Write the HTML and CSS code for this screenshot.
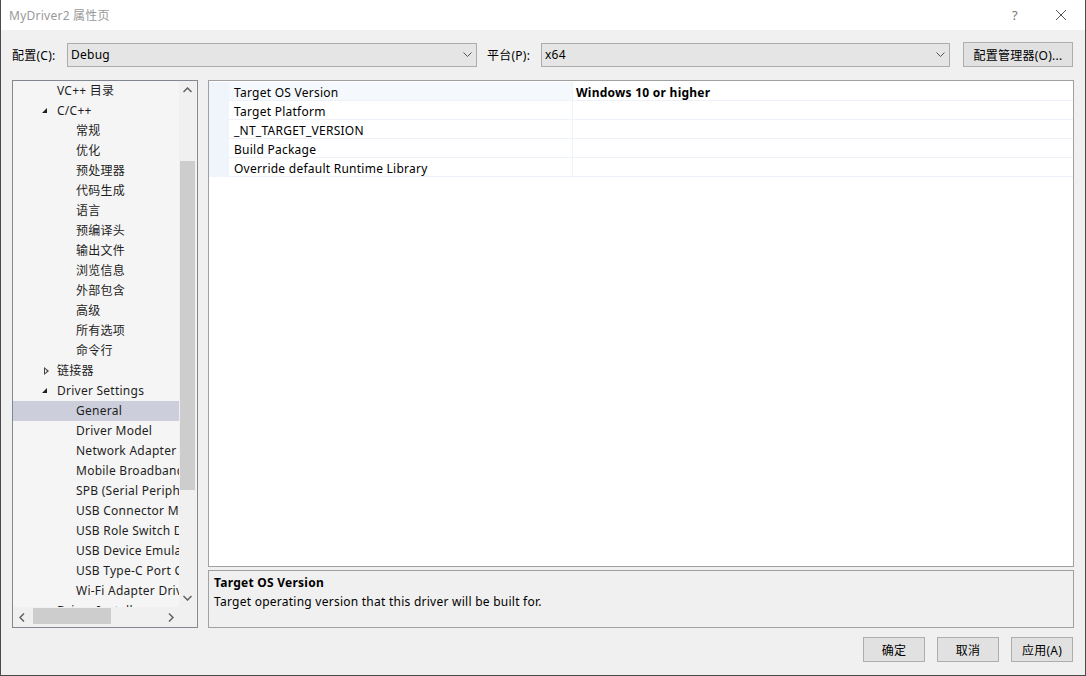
FILE: index.html
```html
<!DOCTYPE html>
<html lang="zh-CN">
<head>
    <meta charset="UTF-8">
    <title>MyDriver2 属性页</title>
    <link rel="stylesheet" href="styles.css">
</head>
<body>
    <div class="dialog">
        <div class="titlebar">
            <span class="title">MyDriver2 属性页</span>
            <span class="caption-btn help">?</span>
            <span class="caption-btn close">
                <svg width="12" height="12" viewBox="0 0 12 12"><path d="M1 1L11 11M11 1L1 11" stroke="#555" stroke-width="1"/></svg>
            </span>
        </div>

        <div class="config-row">
            <label class="lbl">配置(C):</label>
            <div class="combo combo-config">
                <span>Debug</span>
                <svg class="chev" width="9" height="5" viewBox="0 0 9 5"><path d="M0.5 0.5L4.5 4.5L8.5 0.5" stroke="#555" fill="none"/></svg>
            </div>
            <label class="lbl lbl-platform">平台(P):</label>
            <div class="combo combo-platform">
                <span>x64</span>
                <svg class="chev" width="9" height="5" viewBox="0 0 9 5"><path d="M0.5 0.5L4.5 4.5L8.5 0.5" stroke="#555" fill="none"/></svg>
            </div>
            <button class="btn btn-manager">配置管理器(O)...</button>
        </div>

        <div class="main">
            <div class="tree">
                <div class="tree-view">
                    <div class="tree-items">
                        <div class="node l1"><span class="tw"></span>VC++ 目录</div>
                        <div class="node l1"><span class="tw open"></span>C/C++</div>
                        <div class="node l2">常规</div>
                        <div class="node l2">优化</div>
                        <div class="node l2">预处理器</div>
                        <div class="node l2">代码生成</div>
                        <div class="node l2">语言</div>
                        <div class="node l2">预编译头</div>
                        <div class="node l2">输出文件</div>
                        <div class="node l2">浏览信息</div>
                        <div class="node l2">外部包含</div>
                        <div class="node l2">高级</div>
                        <div class="node l2">所有选项</div>
                        <div class="node l2">命令行</div>
                        <div class="node l1"><span class="tw shut"></span>链接器</div>
                        <div class="node l1"><span class="tw open"></span>Driver Settings</div>
                        <div class="node l2 selected">General</div>
                        <div class="node l2">Driver Model</div>
                        <div class="node l2">Network Adapter</div>
                        <div class="node l2">Mobile Broadband</div>
                        <div class="node l2">SPB (Serial Peripheral Bus)</div>
                        <div class="node l2">USB Connector Manager</div>
                        <div class="node l2">USB Role Switch Driver</div>
                        <div class="node l2">USB Device Emulation</div>
                        <div class="node l2">USB Type-C Port Controller</div>
                        <div class="node l2">Wi-Fi Adapter Driver</div>
                        <div class="node l1"><span class="tw shut"></span>Driver Install</div>
                    </div>
                </div>
                <div class="vscroll">
                    <svg class="arr" width="9" height="6" viewBox="0 0 9 6"><path d="M0.5 5L4.5 1L8.5 5" stroke="#606060" stroke-width="1.5" fill="none"/></svg>
                    <div class="vtrack"><div class="vthumb"></div></div>
                    <svg class="arr" width="9" height="6" viewBox="0 0 9 6"><path d="M0.5 1L4.5 5L8.5 1" stroke="#606060" stroke-width="1.5" fill="none"/></svg>
                </div>
                <div class="hscroll">
                    <svg class="arr" width="6" height="9" viewBox="0 0 6 9"><path d="M5 0.5L1 4.5L5 8.5" stroke="#606060" stroke-width="1.5" fill="none"/></svg>
                    <div class="htrack"><div class="hthumb"></div></div>
                    <svg class="arr" width="6" height="9" viewBox="0 0 6 9"><path d="M1 0.5L5 4.5L1 8.5" stroke="#606060" stroke-width="1.5" fill="none"/></svg>
                </div>
                <div class="corner"></div>
            </div>

            <div class="right">
                <div class="grid">
                    <div class="prop first">
                        <div class="margin"></div>
                        <div class="name">Target OS Version</div>
                        <div class="value bold">Windows 10 or higher</div>
                    </div>
                    <div class="prop">
                        <div class="margin"></div>
                        <div class="name">Target Platform</div>
                        <div class="value"></div>
                    </div>
                    <div class="prop">
                        <div class="margin"></div>
                        <div class="name">_NT_TARGET_VERSION</div>
                        <div class="value"></div>
                    </div>
                    <div class="prop">
                        <div class="margin"></div>
                        <div class="name">Build Package</div>
                        <div class="value"></div>
                    </div>
                    <div class="prop">
                        <div class="margin"></div>
                        <div class="name">Override default Runtime Library</div>
                        <div class="value"></div>
                    </div>
                </div>
                <div class="desc">
                    <div class="desc-title">Target OS Version</div>
                    <div class="desc-text">Target operating version that this driver will be built for.</div>
                </div>
            </div>
        </div>

        <div class="footer">
            <button class="btn">确定</button>
            <button class="btn">取消</button>
            <button class="btn">应用(A)</button>
        </div>
    </div>
</body>
</html>
```

FILE: styles.css
```css
* {
    box-sizing: border-box;
}
html, body {
    margin: 0;
    padding: 0;
}
body {
    width: 1086px;
    height: 676px;
    overflow: hidden;
    font-family: "Noto Sans", "Noto Sans CJK SC", sans-serif;
    font-size: 12px;
    letter-spacing: 0.25px;
    color: #000;
    background: #f0f0f0;
}
.dialog {
    width: 1086px;
    height: 676px;
    border: 1px solid #4a4a4a;
    border-top: 0;
    display: flex;
    flex-direction: column;
    background: #f0f0f0;
}
.titlebar {
    height: 30px;
    background: #fff;
    display: flex;
    align-items: center;
    padding-left: 8px;
}
.title {
    color: #999;
    flex: 1;
    font-size: 12px;
}
.caption-btn {
    width: 46px;
    display: flex;
    justify-content: center;
    color: #777;
    font-size: 13px;
}
.close {
    margin-right: 1px;
}

/* config row */
.config-row {
    display: flex;
    align-items: center;
    height: 25px;
    margin-top: 12px;
    padding-left: 11px;
}
.lbl {
    width: 55px;
}
.lbl-platform {
    margin-left: 10px;
    width: 54px;
}
.combo {
    height: 24px;
    background: #e5e5e5;
    border: 1px solid #acacac;
    display: flex;
    align-items: center;
    justify-content: space-between;
    padding: 0 4px 0 3px;
}
.combo-config {
    width: 410px;
}
.combo-platform {
    width: 409px;
}
.btn {
    font-family: inherit;
    font-size: 12px;
    letter-spacing: 0.25px;
    color: #000;
    background: #e1e1e1;
    border: 1px solid #adadad;
    padding: 0;
    height: 25px;
}
.btn-manager {
    width: 110px;
    margin-left: 13px;
}

/* main area */
.main {
    display: flex;
    height: 548px;
    margin-top: 13px;
    padding-left: 11px;
}
.tree {
    width: 186px;
    height: 548px;
    border: 1px solid #828790;
    background: #f5f5f5;
    display: grid;
    grid-template-columns: 166px 17px;
    grid-template-rows: 526px 20px;
}
.tree-view {
    overflow: hidden;
}
.tree-items {
    white-space: nowrap;
}
.node {
    height: 20px;
    line-height: 20px;
    display: flex;
    align-items: center;
    color: #1e1e1e;
}
.node.l1 {
    padding-left: 28px;
}
.node.l2 {
    padding-left: 63px;
}
.node.selected {
    background: #cccedb;
}
.tw {
    width: 16px;
    height: 20px;
    position: relative;
}
.tw.open::after {
    content: "";
    position: absolute;
    left: 1px;
    top: 7px;
    border-style: solid;
    border-width: 0 0 5px 5px;
    border-color: transparent transparent #1e1e1e transparent;
}
.tw.shut::after {
    content: "";
    position: absolute;
    left: 3px;
    top: 6px;
    width: 0;
    height: 0;
    border-style: solid;
    border-width: 4px 0 4px 5px;
    border-color: transparent transparent transparent #444;
}
.tw.shut::before {
    content: "";
    position: absolute;
    left: 4px;
    top: 8px;
    z-index: 1;
    border-style: solid;
    border-width: 2px 0 2px 2.5px;
    border-color: transparent transparent transparent #f5f5f5;
}
.vscroll {
    background: #f0f0f0;
    display: flex;
    flex-direction: column;
    align-items: center;
}
.vscroll .arr {
    margin: 6px 0;
}
.vtrack {
    flex: 1;
    width: 100%;
    padding-top: 62px;
    padding-left: 1px;
}
.vthumb {
    width: 15px;
    height: 329px;
    background: #cdcdcd;
}
.hscroll {
    background: #f0f0f0;
    display: flex;
    align-items: center;
    padding: 0 5px 0 6px;
}
.htrack {
    flex: 1;
    height: 100%;
    padding: 1px 0 0 8px;
}
.hthumb {
    width: 78px;
    height: 16px;
    background: #cdcdcd;
}
.corner {
    background: #f0f0f0;
}

/* right side */
.right {
    margin-left: 10px;
    width: 866px;
    display: flex;
    flex-direction: column;
}
.grid {
    height: 487px;
    background: #fff;
    border: 1px solid #a0a0a0;
    padding-top: 1px;
}
.prop {
    display: flex;
    height: 19px;
    line-height: 21px;
}
.margin {
    width: 20px;
    background: #f0f4fb;
}
.name {
    width: 344px;
    padding-left: 5px;
    border-bottom: 1px solid #eef3fa;
    border-right: 1px solid #eef3fa;
}
.prop.first .name {
    background: #f5f8fc;
}
.value {
    flex: 1;
    padding-left: 3px;
    border-bottom: 1px solid #eef3fa;
}
.bold {
    font-weight: bold;
}
.desc {
    margin-top: 3px;
    height: 58px;
    border: 1px solid #a0a0a0;
    padding: 2px 5px;
    line-height: 19px;
}
.desc-title {
    font-weight: bold;
}

/* footer */
.footer {
    display: flex;
    justify-content: flex-end;
    gap: 12px;
    margin-top: 9px;
    padding-right: 12px;
}
.footer .btn {
    width: 62px;
}
```
